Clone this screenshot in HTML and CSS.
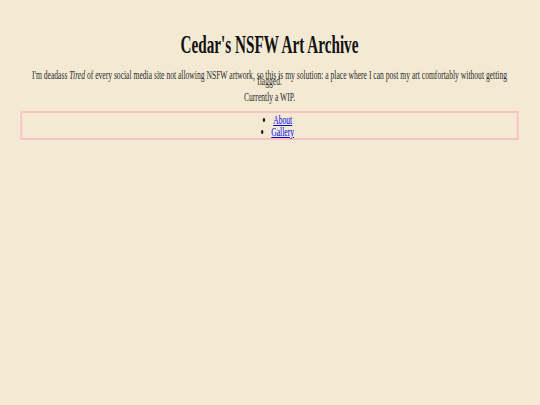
FILE: index.html
```html
<!DOCTYPE html>
<html lang="en">
<head>
<meta charset="utf-8">
<title>Cedar's NSFW Art Archive</title>
<link rel="stylesheet" href="styles.css">
</head>
<body>
<div class="frame">
  <div class="page">
    <h1 class="title">Cedar's NSFW Art Archive</h1>
    <p class="intro">I'm deadass <em>Tired</em> of every social media site not allowing NSFW artwork, so this is my solution: a place where I can post my art comfortably without getting flagged.</p>
    <p class="status">Currently a WIP.</p>
    <nav class="nav">
      <ul class="nav-list">
        <li><a href="#">About</a></li>
        <li><a href="#">Gallery</a></li>
      </ul>
    </nav>
  </div>
</div>
</body>
</html>
```

FILE: styles.css
```css
html, body {
  margin: 0;
  padding: 0;
  background: #f4ead4;
}

.frame {
  width: 540px;
  height: 405px;
  overflow: hidden;
}

.page {
  width: 924px;
  padding: 30px 36px 0 35px;
  box-sizing: border-box;
  transform: scaleX(0.584);
  transform-origin: 0 0;
  font-family: "Liberation Serif", "Times New Roman", serif;
  color: #1a1a1a;
  text-align: center;
}

.title {
  margin: 0;
  font-size: 26px;
  line-height: 30px;
  font-weight: bold;
  color: #111;
}

.intro {
  margin: 12px 0 0;
  font-size: 13px;
  line-height: 6px;
  color: #2a2a2a;
}

.status {
  margin: 5px 0 0;
  font-size: 13px;
  line-height: 15px;
  color: #2a2a2a;
}

.nav {
  margin-top: 7px;
  border-style: solid;
  border-color: #f7c2c4;
  border-width: 2px 3.5px;
}

.nav-list {
  margin: 0;
  padding: 1px 0 0 27px;
  list-style: disc inside;
  font-size: 13px;
  line-height: 12px;
  color: #111;
}

.nav-list a {
  color: #0000ee;
  text-decoration: underline;
}
```
